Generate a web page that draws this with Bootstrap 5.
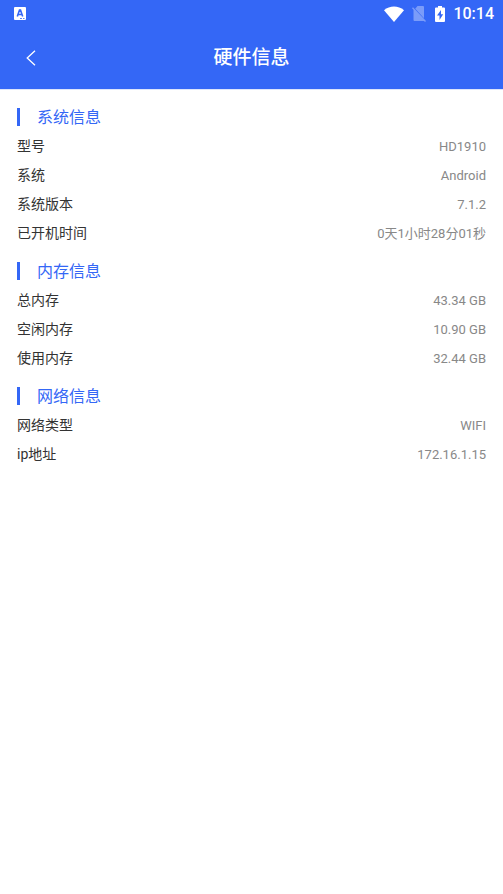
<!DOCTYPE html>
<html lang="zh-CN">
<head>
<meta charset="utf-8">
<meta name="viewport" content="width=device-width, initial-scale=1">
<title>硬件信息</title>
<link href="https://cdn.jsdelivr.net/npm/bootstrap@5.3.0/dist/css/bootstrap.min.css" rel="stylesheet">
<style>
  body { font-family: Roboto, "Noto Sans CJK SC", sans-serif; background: #fff; }
  .app-top { background: #3467f6; color: #fff; border-bottom: 1px solid #dde5fc; }
  .status-bar { height: 27px; padding: 0 9px 0 14px; }
  .clock { font-size: 16px; line-height: 28px; font-weight: 500; margin-left: 7px; }
  .title-bar { display: grid; grid-template-columns: 44px 1fr 44px; height: 62px; padding: 0 9px; }
  .back-btn { height: 44px; color: #fff; }
  .page-title { font-size: 19px; line-height: 28px; font-weight: 500; }
  main { padding: 4px 17px; }
  .info-group { padding-top: 9px; }
  .info-title { font-size: 16px; line-height: 29px; font-weight: 400; color: #3467f6; gap: 17px; }
  .info-title::before { content: ""; width: 3px; height: 18px; margin-bottom: 2px; background: #3467f6; }
  .info-row { line-height: 29px; }
  .info-row dt { font-size: 14px; font-weight: 400; color: #333; }
  .info-row dd { font-size: 13px; color: #888; }
</style>
<script src="https://cdn.jsdelivr.net/npm/bootstrap@5.3.0/dist/js/bootstrap.bundle.min.js" defer></script>
</head>
<body>
<header class="app-top">
  <div class="status-bar d-flex align-items-center">
    <svg class="me-auto" width="12" height="13" viewBox="0 0 12 13" aria-hidden="true">
      <rect width="12" height="13" rx="1" fill="#fff"/>
      <path d="M3.300 9.500 5.500 3h1L8.700 9.500M4 7.500h4" fill="none" stroke="#3467f6" stroke-width="1.600"/>
      <path d="M6 11.500h2M9 11.500h1.500" stroke="#3467f6" stroke-width=".8"/>
    </svg>
    <svg width="20" height="16" viewBox="0 0 20 16" aria-hidden="true">
      <path d="M0 4.200C5.800-.8 14.200-.8 20 4.200L10 16Z" fill="#fff"/>
    </svg>
    <svg class="ms-2" width="14" height="16" viewBox="0 0 14 16" aria-hidden="true">
      <g fill="#fff" opacity=".35">
        <path d="M5.500 0H11q1 0 1 1v11.300L3.200 2.700Z"/>
        <path d="M1 3.200 0 2.200 1 1.300 14 15 13 16 12 15H2.500q-1 0-1-1V4Z"/>
      </g>
    </svg>
    <svg class="ms-2" width="12" height="16" viewBox="0 0 12 16" aria-hidden="true">
      <path d="M4 0h4v1.500h2q1 0 1 1V15q0 1-1 1H2q-1 0-1-1V2.500q0-1 1-1h2Z" fill="#fff"/>
      <path d="M7 4 3 9.500h2.500V14L9.200 8.300H7Z" fill="#3467f6"/>
    </svg>
    <span class="clock">10:14</span>
  </div>
  <div class="title-bar align-items-center">
    <button type="button" class="back-btn btn border-0 p-0 d-flex align-items-center justify-content-center" aria-label="返回">
      <svg width="10" height="16" viewBox="0 0 10 16" fill="none" stroke="currentColor" stroke-width="1.300" aria-hidden="true"><path d="M9 .7 1.200 8 9 15.300"/></svg>
    </button>
    <h1 class="page-title text-center m-0">硬件信息</h1>
  </div>
</header>
<main>
  <section class="info-group">
    <h2 class="info-title d-flex align-items-center m-0">系统信息</h2>
    <dl class="m-0">
      <div class="info-row d-flex justify-content-between"><dt>型号</dt><dd class="m-0">HD1910</dd></div>
      <div class="info-row d-flex justify-content-between"><dt>系统</dt><dd class="m-0">Android</dd></div>
      <div class="info-row d-flex justify-content-between"><dt>系统版本</dt><dd class="m-0">7.1.2</dd></div>
      <div class="info-row d-flex justify-content-between"><dt>已开机时间</dt><dd class="m-0">0天1小时28分01秒</dd></div>
    </dl>
  </section>
  <section class="info-group">
    <h2 class="info-title d-flex align-items-center m-0">内存信息</h2>
    <dl class="m-0">
      <div class="info-row d-flex justify-content-between"><dt>总内存</dt><dd class="m-0">43.34 GB</dd></div>
      <div class="info-row d-flex justify-content-between"><dt>空闲内存</dt><dd class="m-0">10.90 GB</dd></div>
      <div class="info-row d-flex justify-content-between"><dt>使用内存</dt><dd class="m-0">32.44 GB</dd></div>
    </dl>
  </section>
  <section class="info-group">
    <h2 class="info-title d-flex align-items-center m-0">网络信息</h2>
    <dl class="m-0">
      <div class="info-row d-flex justify-content-between"><dt>网络类型</dt><dd class="m-0">WIFI</dd></div>
      <div class="info-row d-flex justify-content-between"><dt>ip地址</dt><dd class="m-0">172.16.1.15</dd></div>
    </dl>
  </section>
</main>
</body>
</html>
